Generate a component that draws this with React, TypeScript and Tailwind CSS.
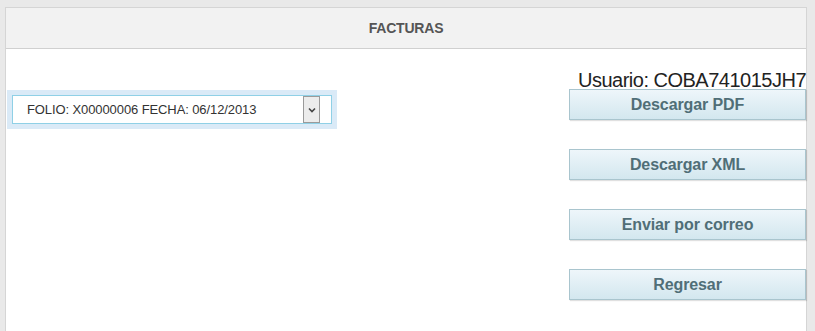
import React from 'react';

const ACTIONS = ['Descargar PDF', 'Descargar XML', 'Enviar por correo', 'Regresar'];

function ActionButton({ label }: { label: string }) {
    return (
        <button className="w-full h-[31px] border border-[#a9c5ce] bg-gradient-to-b from-[#eef6fa] to-[#d3e7ef] shadow-[1px_1px_1px_rgba(0,0,0,0.12)] text-[16px] font-bold text-[#506e77] leading-none tracking-[-0.1px]">
            {label}
        </button>
    );
}

export default function App() {
    return (
        <div className="w-[815px] h-[331px] overflow-hidden bg-[#e9e9e9] pt-[7px] pl-[5px] pr-[8px]" style={{ fontFamily: '"Liberation Sans", Arial, sans-serif' }}>
            <div className="border border-[#d5d5d5] bg-white h-[340px]">
                <div className="h-[41px] bg-[#f2f2f2] border-b border-[#d0d0d0] flex items-center justify-center">
                    <h2 className="text-[14px] font-bold text-[#555] tracking-[-0.2px]">FACTURAS</h2>
                </div>

                <div className="flex justify-between">
                    <div className="pl-[6px] pt-[46px]">
                        <div className="w-[320px] h-[29px] bg-white border border-[#8fd0e6] ring-[5px] ring-[#daeaf7] flex items-center justify-between pl-[14px] pr-[11px]">
                            <span className="text-[13px] text-[#333] tracking-[-0.1px]">FOLIO: X00000006 FECHA: 06/12/2013</span>
                            <span className="w-[17px] h-[27px] border border-[#9a9a9a] bg-[#ececec] flex items-center justify-center">
                                <svg width="8" height="6" viewBox="0 0 8 6">
                                    <path d="M1 1.5 L4 4.5 L7 1.5" stroke="#444" strokeWidth="1.6" fill="none" />
                                </svg>
                            </span>
                        </div>
                    </div>

                    <div className="w-[237px] pt-[22px] flex flex-col">
                        <p className="text-[20px] leading-[18px] text-[#222] tracking-[-0.5px] text-right whitespace-nowrap">Usuario: COBA741015JH7</p>
                        <div className="flex flex-col gap-[29px]">
                            {ACTIONS.map((a) => (
                                <ActionButton key={a} label={a} />
                            ))}
                        </div>
                    </div>
                </div>
            </div>
        </div>
    );
}
